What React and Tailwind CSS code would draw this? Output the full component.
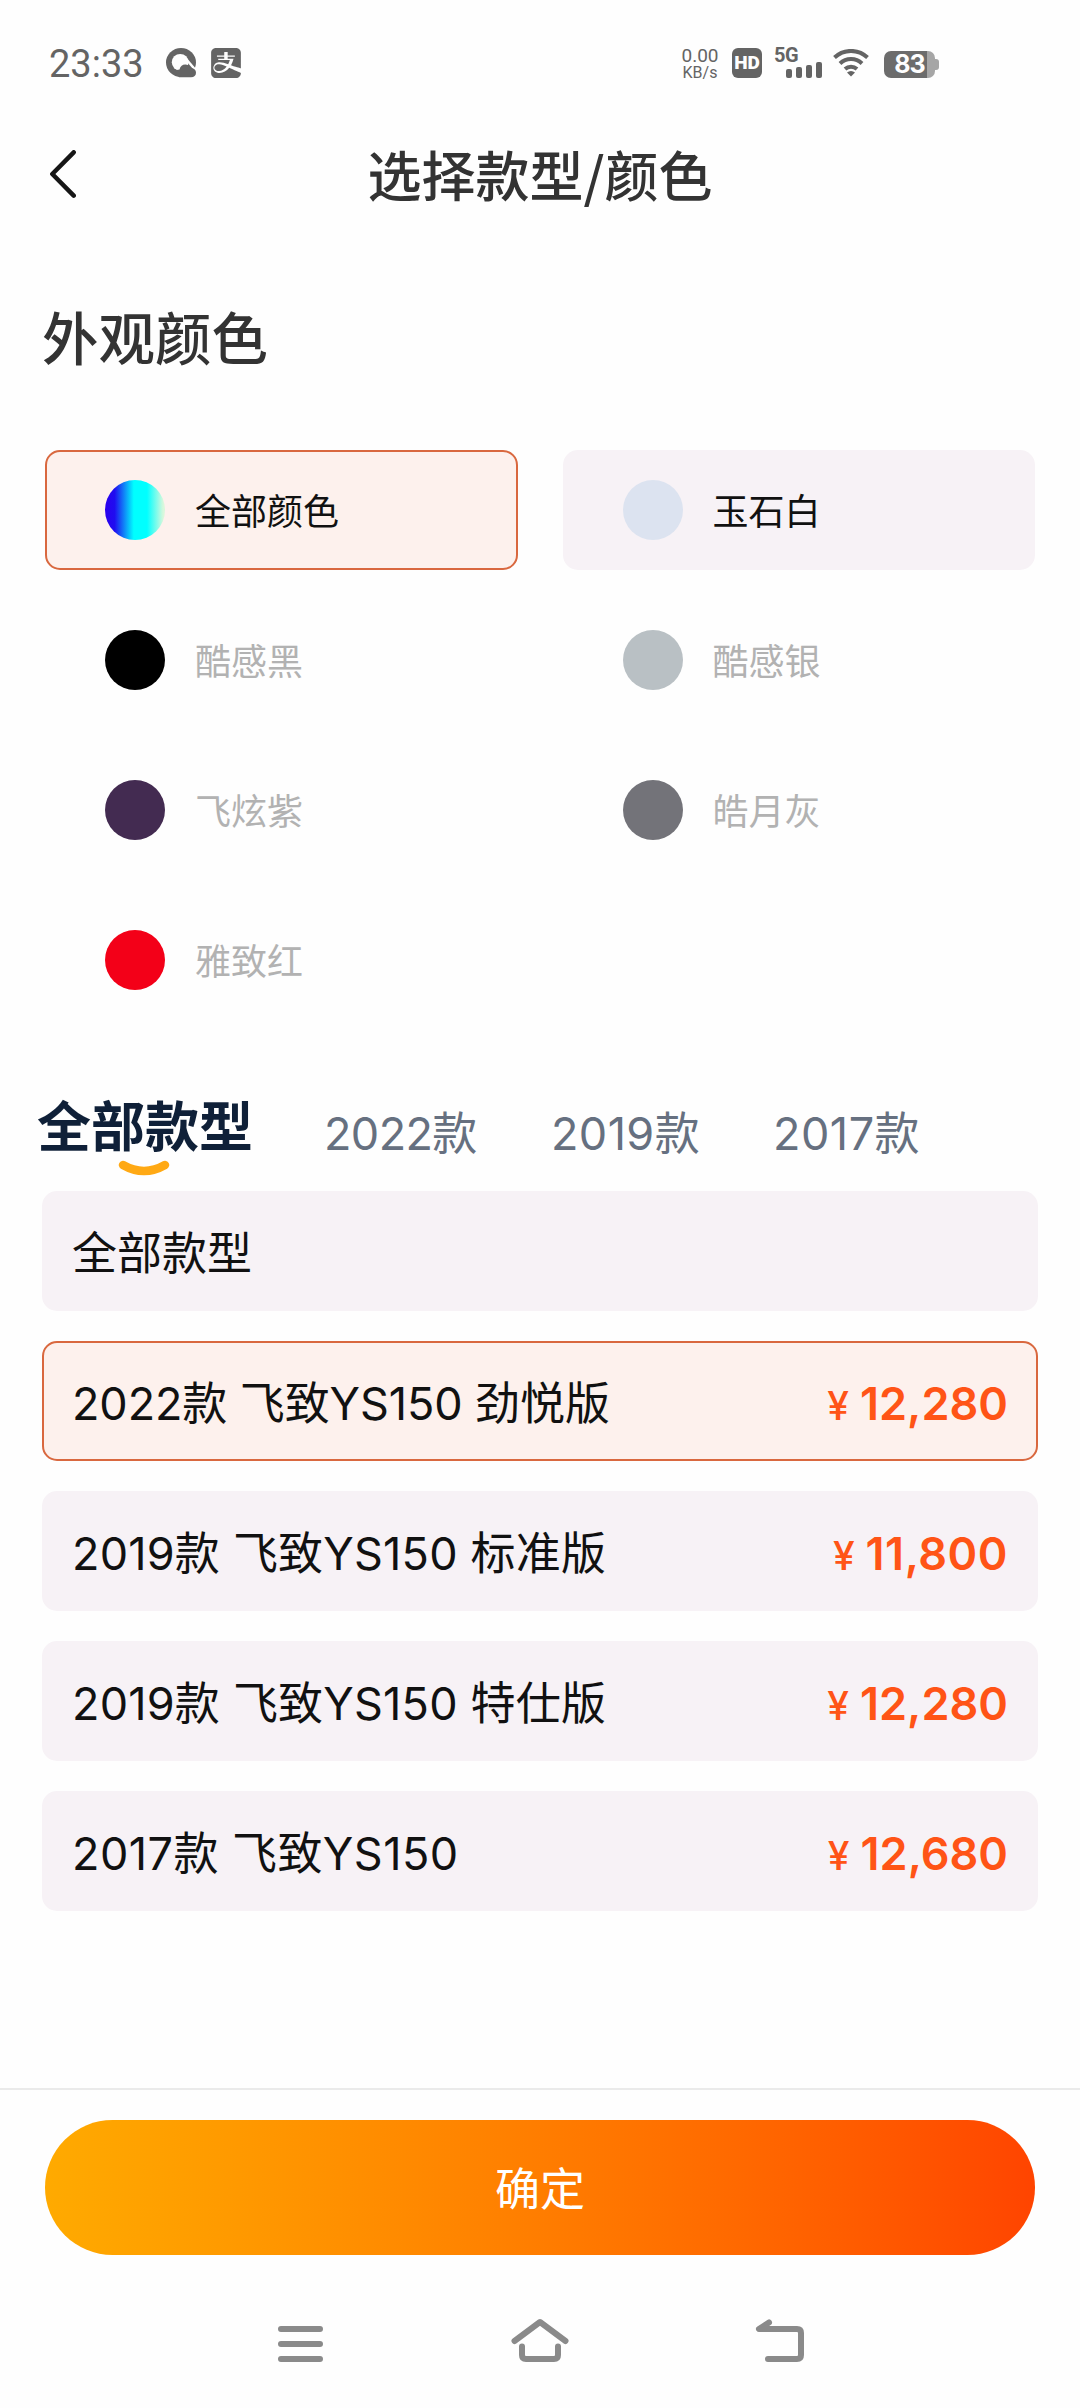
import { useState } from 'react';
import { SiAlipay } from 'react-icons/si';

const colors = [
  { name: '全部颜色', dot: 'bg-[linear-gradient(90deg,#2a00ee_0%,#200cf0_16%,#00ffff_48%,#00ffff_70%,#d8f8dc_97%)]', enabled: true },
  { name: '玉石白', dot: 'bg-[#dce3f0]', enabled: true },
  { name: '酷感黑', dot: 'bg-black', enabled: false },
  { name: '酷感银', dot: 'bg-[#b9c0c4]', enabled: false },
  { name: '飞炫紫', dot: 'bg-[#432b51]', enabled: false },
  { name: '皓月灰', dot: 'bg-[#737379]', enabled: false },
  { name: '雅致红', dot: 'bg-[#f30018]', enabled: false },
];

const years = [
  { name: '2022款', style: 'w-[227px] tracking-[-0.6px]' },
  { name: '2019款', style: 'w-[222px] tracking-[0.4px]' },
  { name: '2017款', style: 'tracking-[0.5px]' },
];

const models = [
  { name: '全部款型', style: '' },
  { name: '2022款 飞致YS150 劲悦版', price: '12,280', style: 'tracking-[-0.1px]' },
  { name: '2019款 飞致YS150 标准版', price: '11,800', style: 'tracking-[0.2px]', priceStyle: 'tracking-[0.5px]' },
  { name: '2019款 飞致YS150 特仕版', price: '12,280', style: 'tracking-[0.2px]' },
  { name: '2017款 飞致YS150', price: '12,680', style: 'tracking-[0.45px]' },
];

function StatusBar() {
  return (
    <div className="flex h-[126px] items-center pl-[49px] text-[#646464]">
      <span className="w-[117px] pt-[2px] font-['Roboto'] text-[38px] leading-[44px]">23:33</span>
      <svg className="h-[30px] w-[30px]" viewBox="0 0 30 30">
        <ellipse cx="15" cy="14.500" rx="15" ry="14.500" fill="currentColor" />
        <circle cx="14.200" cy="14.300" r="8.400" fill="#fefefe" />
        <path d="M20.500 11.500l8.500 10" stroke="#fefefe" strokeWidth="2.500" />
        <path d="M9 23.500c1-1.300 2.500-2 4.500-2 .8-3.300 3-5 5.700-5 2.600 0 4.300 1.200 5 3.200 3.600.2 5.800 2.200 5.800 5 0 2.800-2 4.600-5 4.600H13z" fill="currentColor" />
      </svg>
      <SiAlipay className="ml-[15px] h-[30px] w-[30px]" />

      <div className="ml-[440px] w-[38px] text-center font-['Roboto']">
        <div className="text-[19px] leading-[19px]">0.00</div>
        <div className="text-[16px] leading-[16px]">KB/s</div>
      </div>
      <div className="ml-[13px] flex h-[30px] w-[30px] items-center justify-center rounded-[6px] bg-[#646464] font-['Roboto'] text-[19px] font-black leading-[22px] text-[#fefefe]">
        HD
      </div>
      <div className="ml-[12px] flex h-[30px] w-[48px] flex-col justify-between">
        <span className="h-[14px] font-['Roboto'] text-[20px] font-bold leading-[15px] tracking-[-0.5px]">5G</span>
        <div className="-mt-[4px] ml-[12px] flex items-end gap-[4px]">
          <span className="h-[9px] w-[6px] rounded-[2px] bg-[#646464]" />
          <span className="h-[11px] w-[6px] rounded-[2px] bg-[#646464]" />
          <span className="h-[13px] w-[6px] rounded-[2px] bg-[#646464]" />
          <span className="h-[16px] w-[6px] rounded-[2px] bg-[#646464]" />
        </div>
      </div>
      <svg className="ml-[11px] h-[28px] w-[36px]" viewBox="0 0 36 28" fill="none" stroke="currentColor" strokeWidth="4">
        <path d="M1.500 8.500a24 24 0 0 1 33 0" />
        <path d="M7 14.500a16 16 0 0 1 22 0" />
        <path d="M12 20a9 9 0 0 1 12 0" />
        <path d="M18 27.500l-4-4a6 6 0 0 1 8 0z" fill="currentColor" stroke="none" />
      </svg>
      <div className="ml-[15px] mt-[3px] flex items-center">
        <div className="flex h-[27px] w-[51px] items-center justify-center rounded-[7px] bg-[linear-gradient(90deg,#6c6c6c_43px,#a6a6a6_43px)] font-['Inter'] text-[25px] font-bold leading-[27px] tracking-[-1px] text-[#fefefe]">
          83
        </div>
        <span className="h-[11px] w-[4px] rounded-r-[3px] bg-[#a6a6a6]" />
      </div>
    </div>
  );
}

function NavBar() {
  return (
    <div className="flex h-[153px] items-center justify-center pt-[18px] text-[#8a8a8a]">
      <svg className="h-[60px] w-[540px]" viewBox="270 2312 540 60" fill="none" stroke="currentColor" strokeWidth="6" strokeLinecap="round" strokeLinejoin="round">
        <path d="M281 2330h39M281 2345h39M281 2360h39" />
        <path d="M514.500 2342l25.500-19 25.500 19M522 2347.500v8.500q0 4 4 4h28q4 0 4-4v-8.500" />
        <path d="M769 2323.500l-10 6.500h38q4 0 4 4v22q0 4-4 4h-29" />
      </svg>
    </div>
  );
}

export default function App() {
  const [color, setColor] = useState('全部颜色');
  const [model, setModel] = useState(1);

  return (
    <div className="flex h-[2408px] w-[1080px] flex-col overflow-hidden bg-[#fefefe] font-['Inter','Noto_Sans_CJK_SC',sans-serif]">
      <StatusBar />

      {/* Header */}
      <header className="grid h-[98px] grid-cols-[1fr_auto_1fr] items-center">
        <svg className="ml-[48px] h-[50px] w-[30px]" viewBox="0 0 30 50" fill="none" stroke="#161616" strokeWidth="4.500" strokeLinecap="round" strokeLinejoin="round">
          <path d="M25.700 2.300L4.300 24l21.400 21.700" />
        </svg>
        <h1 className="pb-[3px] font-['Noto_Sans_CJK_SC',sans-serif] text-[54px] font-medium leading-[60px] text-[#333]">选择款型/颜色</h1>
      </header>

      {/* Exterior colors */}
      <h2 className="mt-[75px] pl-[42px] font-['Noto_Sans_CJK_SC',sans-serif] text-[56.500px] font-medium leading-[72px] text-[#333]">外观颜色</h2>
      <div className="mx-[45px] mt-[79px] grid grid-cols-2 gap-x-[45px] gap-y-[30px] font-['Noto_Sans_CJK_SC',sans-serif]">
        {colors.map((c) => (
          <button
            key={c.name}
            disabled={!c.enabled}
            onClick={() => setColor(c.name)}
            className={`flex h-[120px] items-center rounded-[15px] border-2 pl-[58px] text-[36px]
              ${color === c.name
                ? 'border-[#d9683f] bg-[#fdf1ed] text-[#111]'
                : c.enabled
                  ? 'border-transparent bg-[#f7f2f6] text-[#111]'
                  : 'border-transparent text-[#b2b2b2]'
              }`}
          >
            <span className={`h-[60px] w-[60px] rounded-full ${c.dot}`} />
            <span className="ml-[30px] pb-[2px] leading-[54px]">{c.name}</span>
          </button>
        ))}
      </div>

      {/* Year tabs */}
      <div className="mt-[70px] flex h-[101px] pl-[37px]">
        <div className="relative w-[217px] font-['Noto_Sans_CJK_SC',sans-serif] text-[54px] font-bold leading-[68px] text-[#0f2038]">
          全部款型
          <svg className="absolute left-[80px] top-[70px] h-[18px] w-[54px]" viewBox="0 0 54 18" fill="none" stroke="#ffa914" strokeWidth="8.500" strokeLinecap="round">
            <path d="M6 5q21 12 42 0" />
          </svg>
        </div>
        <div className="ml-[70px] flex pt-[10px] text-[45px] leading-[68px] text-[#667080]">
          {years.map((y) => (
            <span key={y.name} className={y.style}>{y.name}</span>
          ))}
        </div>
      </div>

      {/* Models */}
      <div className="mx-[42px] flex flex-col gap-[30px]">
        {models.map((m, i) => (
          <button
            key={m.name}
            onClick={() => setModel(i)}
            className={`flex h-[120px] items-center justify-between rounded-[15px] border-2 px-[28px] pt-[5px] text-[45px] text-[#111]
              ${model === i ? 'border-[#d9683f] bg-[#fdf1ed]' : 'border-transparent bg-[#f7f2f6]'}`}
          >
            <span className={m.style}>{m.name}</span>
            {m.price && (
              <span className="flex items-baseline font-semibold text-[#ff5416]">
                <span className="mr-[11px] text-[39px] font-medium leading-[48px]">¥</span>
                <span className={m.priceStyle}>{m.price}</span>
              </span>
            )}
          </button>
        ))}
      </div>

      <div className="mt-auto border-t-2 border-[#eaeaea] px-[45px] pt-[30px]">
        <button className="h-[135px] w-full rounded-full bg-linear-to-r from-[#ffaa00] to-[#ff4400] pb-[2px] font-['Noto_Sans_CJK_SC',sans-serif] text-[45px] text-white">
          确定
        </button>
      </div>
      <NavBar />
    </div>
  );
}
